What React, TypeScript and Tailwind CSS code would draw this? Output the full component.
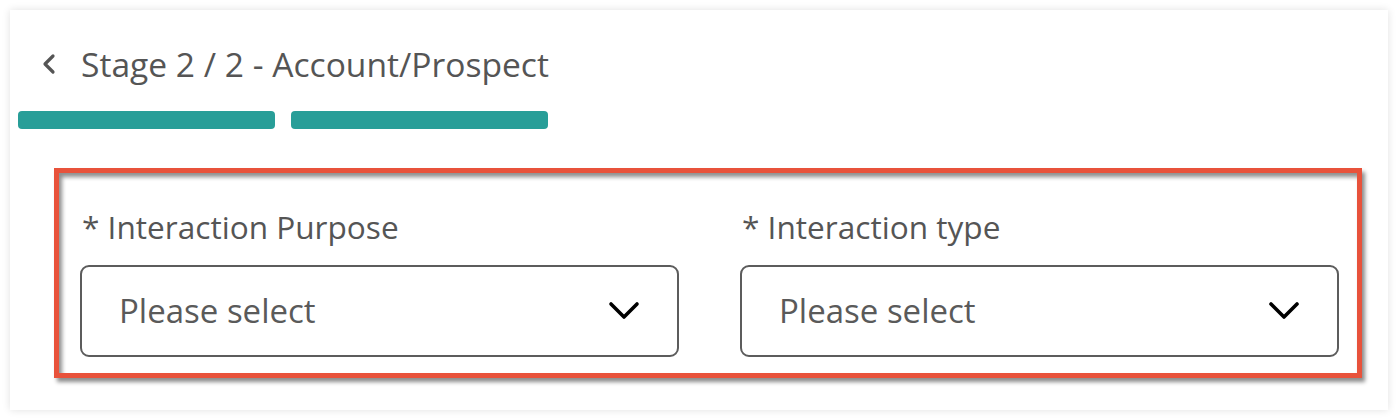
function ChevronDownIcon() {
  return (
    <svg width="32" height="20" viewBox="0 0 32 20" fill="none" className="shrink-0">
      <polyline points="3,3 16,16 29,3" stroke="#000" strokeWidth="3.6" strokeLinecap="round" strokeLinejoin="round" />
    </svg>
  );
}

function SelectField({ label }: { label: string }) {
  return (
    <div className="flex flex-col">
      <label className="text-[31.6px] leading-[34px] text-[#555555] pl-[2px]">{label}</label>
      <div className="mt-[21px] h-[92px] rounded-[9px] border-2 border-[#5c5c5c] flex items-center justify-between pl-[37px] pr-[37px]">
        <span className="text-[33px] leading-[40px] text-[#5a5a5a]">Please select</span>
        <ChevronDownIcon />
      </div>
    </div>
  );
}

export default function App() {
  return (
    <div className="bg-white p-[10px]" style={{ fontFamily: '"Open Sans", "Noto Sans", sans-serif' }}>
      <div className="bg-white h-[400px] shadow-[0_0_8px_rgba(0,0,0,0.12)]">
        {/* Header */}
        <div className="flex items-center pt-[36px] pl-[31px]">
          <svg width="16" height="22" viewBox="0 0 16 22" fill="none" className="shrink-0">
            <polyline points="12,3 4,11 12,19" stroke="#555555" strokeWidth="3.2" strokeLinecap="round" strokeLinejoin="round" />
          </svg>
          <h1 className="ml-[24px] text-[33.6px] leading-[36px] text-[#555555]">Stage 2 / 2 - Account/Prospect</h1>
        </div>

        {/* Progress */}
        <div className="flex gap-[16px] pl-[8px] mt-[29px]">
          <div className="w-[257px] h-[18px] rounded-[4px] bg-[#289e98]" />
          <div className="w-[257px] h-[18px] rounded-[4px] bg-[#289e98]" />
        </div>

        {/* Fields */}
        <div className="ml-[44px] mt-[39px] w-[1308px] h-[210px] border-[5px] border-[#e8523b] shadow-[3px_4px_4px_rgba(0,0,0,0.45),inset_3px_4px_4px_rgba(0,0,0,0.45)] grid grid-cols-2 gap-[61px] pl-[21px] pr-[18px] pt-[37px]">
          <SelectField label="* Interaction Purpose" />
          <SelectField label="* Interaction type" />
        </div>
      </div>
    </div>
  );
}
